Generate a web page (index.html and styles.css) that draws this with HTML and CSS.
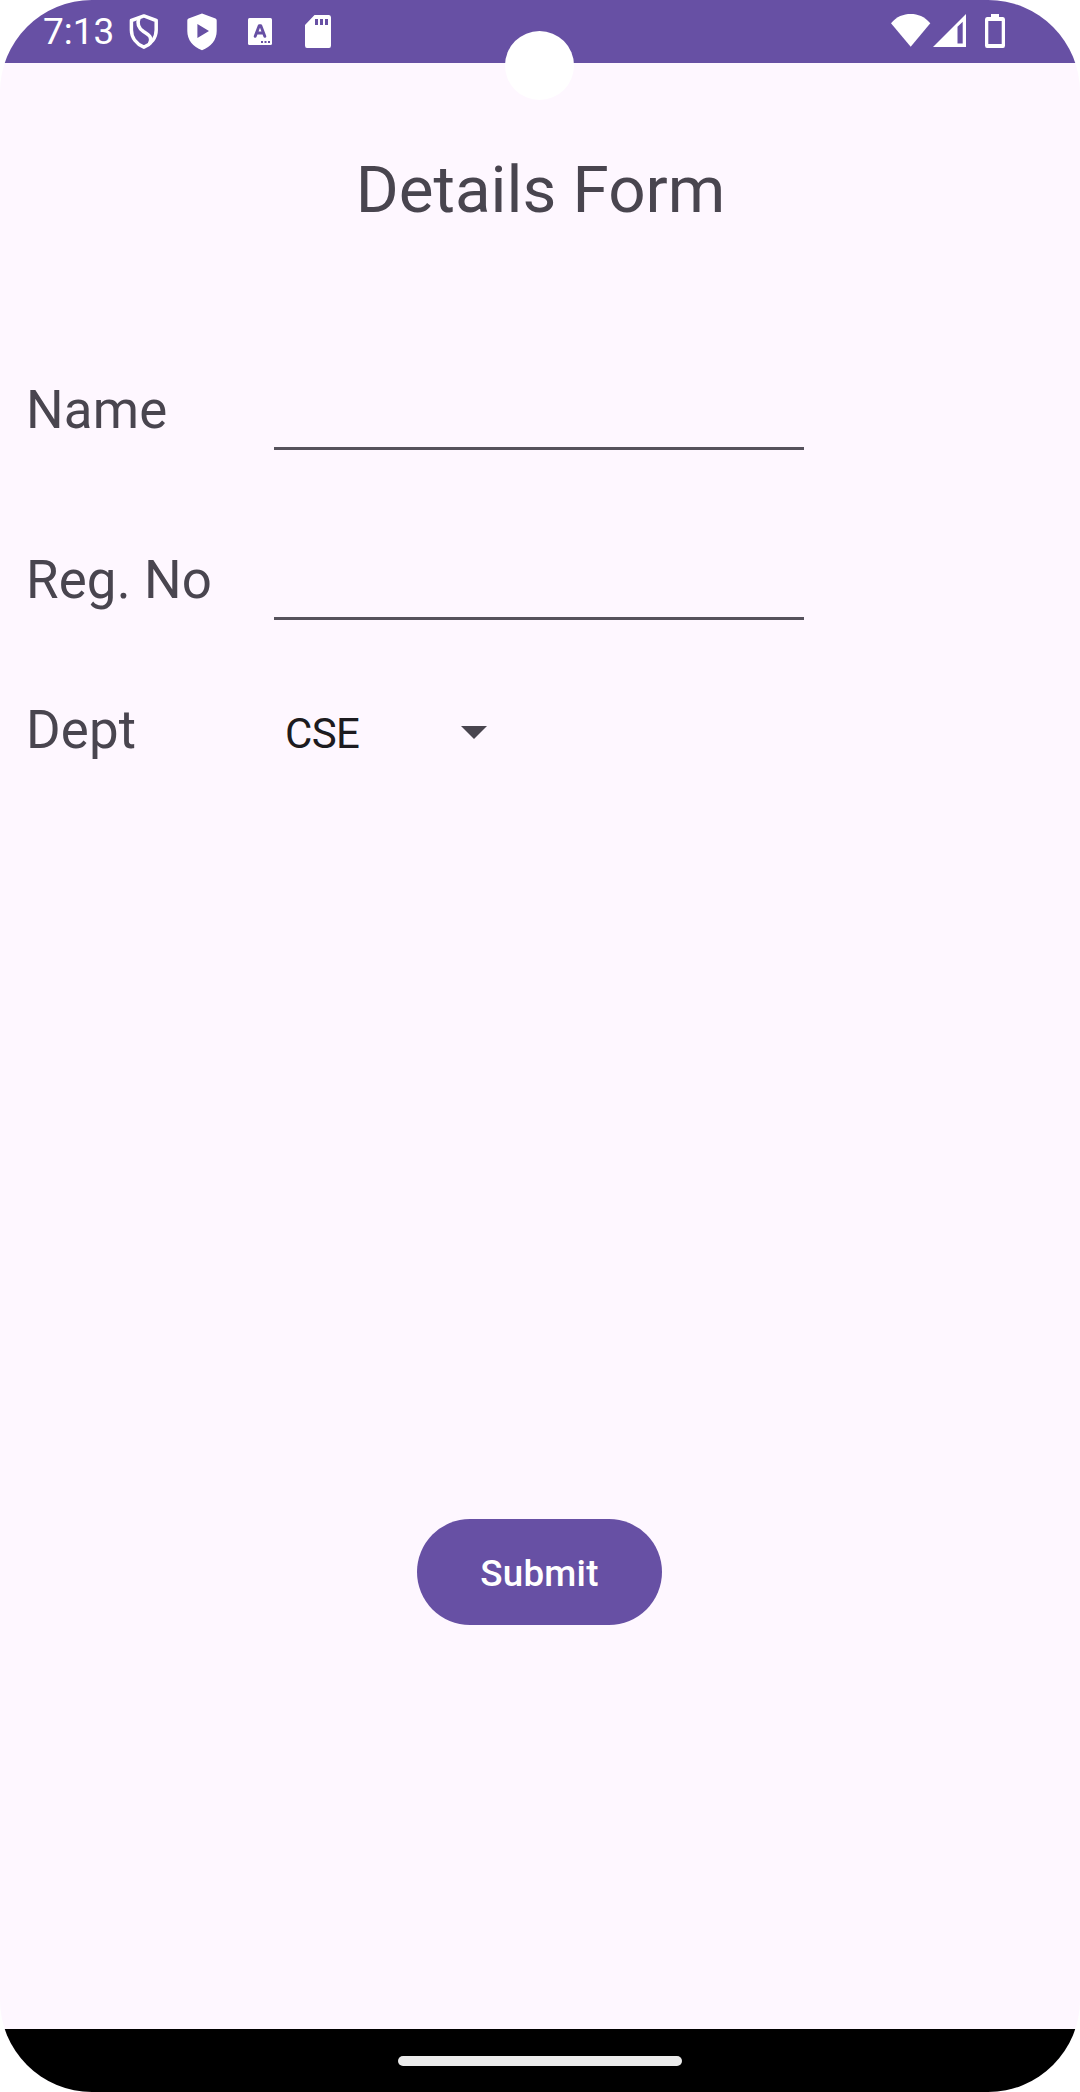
FILE: index.html
```html
<!DOCTYPE html>
<html lang="en">
<head>
<meta charset="utf-8">
<title>Details Form</title>
<link rel="stylesheet" href="styles.css">
</head>
<body>
<div class="screen">
  <header class="status-bar">
    <span class="clock">7:13</span>
    <svg class="icon" width="30" height="36" viewBox="0 0 30 36" fill="none" stroke="#fff" stroke-width="3.5" stroke-linejoin="round"><path d="M14.9 1.9 27.2 6.500V16C27.200 23.500 22.400 30 14.900 33.200C7.400 30 2.400 23.500 2.400 16V6.500Z"/><path d="M10 4C7.500 10.500 10 14.500 14.500 17.500C21 21.500 23.500 23.500 20.500 30"/></svg>
    <svg class="icon" width="30" height="38" viewBox="0 0 30 38" fill="#fff" fill-rule="evenodd"><path d="M15 .5 28.500 5.500Q29.700 6 29.700 7.500V18C29.700 27 24 34 15 37.200C6 34 .3 27 .3 18V7.500Q.3 6 1.500 5.500ZM10.400 11V25L22 18Z"/></svg>
    <svg class="icon" width="24" height="27" viewBox="0 0 24 27"><rect width="24" height="27" rx="1.500" fill="#fff"/><path d="M7.200 18.300 11.200 7.700H12.800L16.800 18.300M8.800 15H15.200" fill="none" stroke="#6750a4" stroke-width="2.900" stroke-linecap="round" stroke-linejoin="round"/><path d="M13 23h2v2h-2zm3.500 0h2v2h-2zm3.500 0h2v2h-2z" fill="#6750a4"/></svg>
    <svg class="icon" width="26" height="33" viewBox="0 0 26 33" fill="#fff" fill-rule="evenodd"><path d="M9.500 0H24Q26 0 26 2.500V30.500Q26 33 24 33H2Q0 33 0 30.500V10ZM10 4V10H13V4ZM15 4V10H18V4ZM20 4V10H23V4Z"/></svg>
    <div class="system-icons">
      <svg class="icon" width="40" height="33" viewBox="0 0 40 33" fill="#fff"><path d="M0 9.200C5.500 2.500 12.500 0 19.700 0S33.500 2.500 39.300 9.200L19.700 32.700Z"/></svg>
      <svg class="icon" width="33" height="33" viewBox="0 0 33 33" fill="#fff" fill-rule="evenodd"><path d="M0 33 33 0V33ZM24.500 12.700V29.400H29.700V7.700Z"/></svg>
      <svg class="icon" width="20" height="34" viewBox="0 0 20 34" fill="#fff" fill-rule="evenodd"><path d="M6 0H14V3H18Q20 3 20 5.500V31.500Q20 34 18 34H2Q0 34 0 31.500V5.500Q0 3 2 3H6ZM3.300 7V30H16.700V7Z"/></svg>
    </div>
  </header>
  <main class="content">
    <h1 class="title">Details Form</h1>
    <form class="form">
      <div class="row">
        <label class="label" for="name">Name</label>
        <input class="field" id="name" type="text">
      </div>
      <div class="row">
        <label class="label" for="reg">Reg. No</label>
        <input class="field" id="reg" type="text">
      </div>
      <div class="row row-dept">
        <span class="label">Dept</span>
        <div class="spinner">
          <span class="spinner-value">CSE</span>
          <svg class="caret" width="26" height="13" viewBox="0 0 26 13" fill="#49454f"><path d="M0 0H26L13 13Z"/></svg>
        </div>
      </div>
      <button class="submit" type="button">Submit</button>
    </form>
  </main>
  <footer class="nav-bar"><div class="handle"></div></footer>
  <div class="camera"></div>
</div>
</body>
</html>
```
FILE: styles.css
```css
* { box-sizing: border-box; }
body { margin: 0; background: #fff; font-family: Roboto, sans-serif; }
.screen {
  position: relative;
  display: flex;
  flex-direction: column;
  width: 1080px;
  height: 2092px;
  overflow: hidden;
  border-radius: 92px;
  background: #fef7ff;
}
.status-bar {
  display: flex;
  align-items: flex-start;
  height: 63px;
  padding: 14px 75px 0 43px;
  background: #6750a4;
  color: #fff;
}
.icon { display: block; flex: none; }
.clock { width: 86px; margin-top: -4px; font-size: 37px; line-height: 43px; white-space: nowrap; }
.clock + .icon + .icon { margin: -1px 0 0 28px; }
.clock + .icon + .icon + .icon { margin: 4px 0 0 31px; }
.clock + .icon + .icon + .icon + .icon { margin: 1px 0 0 33px; }
.system-icons { display: flex; margin-left: auto; }
.system-icons .icon:nth-child(2) { margin: 0 19px 0 2px; }
.content { flex: 1; padding: 88px 27px 0 26px; color: #49454f; }
.title {
  margin: 0;
  padding-left: 2px;
  font-size: 65.6px;
  font-weight: 400;
  line-height: 77px;
  text-align: center;
}
.form { display: flex; flex-direction: column; margin-top: 151px; }
.row { display: flex; height: 71px; margin-bottom: 99px; }
.row + .row { margin-bottom: 79px; }
.label { width: 248px; padding-top: 1px; font-size: 52.8px; line-height: 61px; letter-spacing: 0.15px; }
.field {
  width: 530px;
  padding: 0;
  border: 0;
  border-bottom: 3px solid #56525c;
  background: none;
  font: 42px Roboto, sans-serif;
  outline: none;
}
.row.row-dept { height: 62px; margin-bottom: 758px; }
.spinner { display: flex; align-items: flex-start; justify-content: space-between; width: 213px; padding: 10px 0 0 11px; }
.spinner-value { color: #1d1b20; font-size: 42px; line-height: 50px; letter-spacing: -0.6px; }
.caret { margin-top: 17px; }
.submit {
  align-self: center;
  width: 245px;
  height: 106px;
  padding: 2px 0 0;
  border: 0;
  border-radius: 53px;
  background: #6750a4;
  color: #fff;
  font: 500 36.75px Roboto, sans-serif;
  letter-spacing: 0.00714em;
}
.nav-bar { height: 63px; padding-top: 27px; background: #000; }
.handle { width: 284px; height: 10px; margin: 0 auto; border-radius: 5px; background: #ebebeb; }
.camera {
  position: absolute;
  top: 30.5px;
  left: 504.5px;
  width: 69.5px;
  height: 69.5px;
  border-radius: 50%;
  background: #fff;
}
```
